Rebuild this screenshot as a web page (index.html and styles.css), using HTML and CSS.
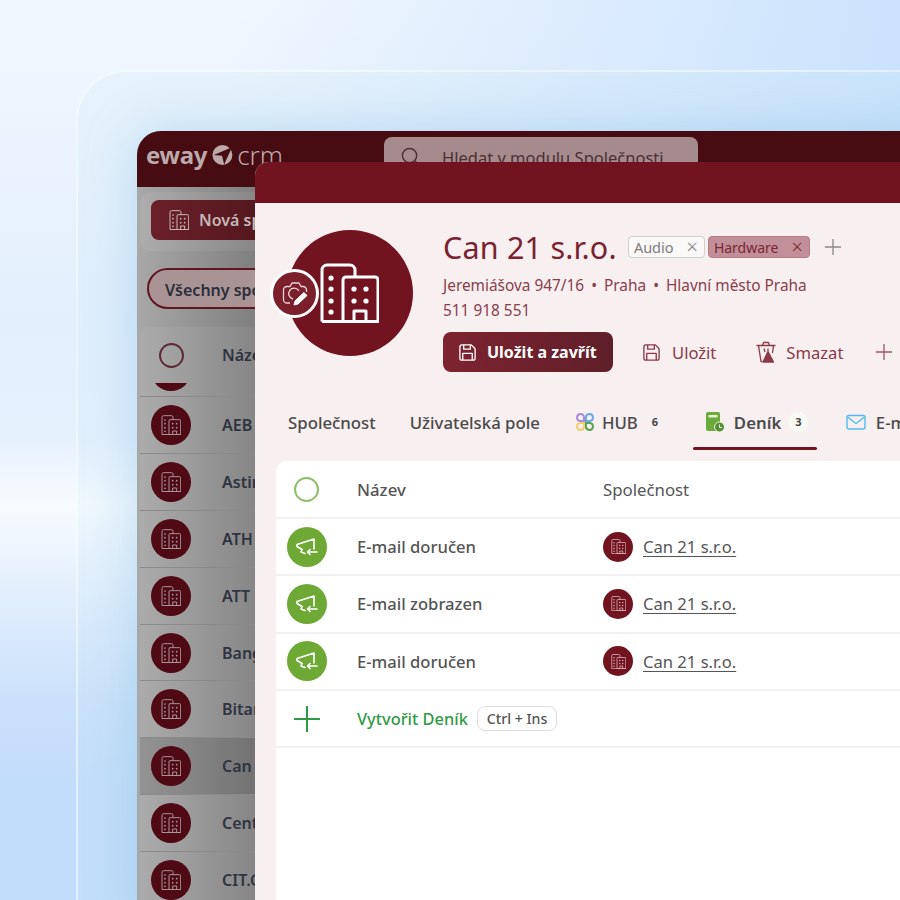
FILE: index.html
```html
<!DOCTYPE html>
<html lang="cs">
<head>
  <meta charset="utf-8" />
  <title>eWay CRM</title>
  <link rel="stylesheet" href="styles.css">
</head>
<body>
  <svg class="defs" width="0" height="0">
    <symbol id="building" viewBox="0 0 60 60">
      <g fill="none" stroke="currentColor" stroke-width="3" stroke-linejoin="round">
        <path d="M3 58.500V7a5 5 0 0 1 5-5H31a5 5 0 0 1 5 5V14"/>
        <path d="M24 58.500V17a3 3 0 0 1 3-3H56a3 3 0 0 1 3 3V58.500Z"/>
        <path d="M3 58.500H59M35 58.500V48H47V58.500"/>
      </g>
      <g fill="currentColor">
        <circle cx="12" cy="15" r="2.600"/><circle cx="12" cy="26" r="2.600"/><circle cx="12" cy="38" r="2.600"/><circle cx="12" cy="49" r="2.600"/>
        <circle cx="35" cy="26" r="2.600"/><circle cx="47" cy="26" r="2.600"/><circle cx="35" cy="38" r="2.600"/><circle cx="47" cy="38" r="2.600"/>
      </g>
    </symbol>
    <symbol id="horn" viewBox="0 0 24 24">
      <g fill="none" stroke="currentColor" stroke-width="1.600" stroke-linecap="round" stroke-linejoin="round">
        <path d="M2 9.500 19 4V14M2 9.500V11.500L7 14.500"/>
        <path d="M7 14.500 6 17 10 18.500M22 17H12.500M15 14.500 12.500 17 15 19.500"/>
      </g>
    </symbol>
    <symbol id="save" viewBox="0 0 20 20">
      <g fill="none" stroke="currentColor" stroke-width="1.400" stroke-linejoin="round">
        <path d="M2 4a2 2 0 0 1 2-2H14L18 6V16a2 2 0 0 1-2 2H4a2 2 0 0 1-2-2Z"/>
        <path d="M6 2V6.500H13V2M5 18V11H15V18"/>
      </g>
    </symbol>
  </svg>

  <div class="stage">
    <div class="frame"></div>

    <section class="back">
      <header class="back-head">
        <div class="logo">
          <span class="logo-eway">eway</span>
          <svg class="logo-mark" viewBox="0 0 24 24"><circle cx="12" cy="12" r="11.500" fill="currentColor"/><path d="M2 12 23 3 14 23 11.500 13Z" fill="#470b12"/></svg>
          <span class="logo-crm">crm</span>
        </div>
        <div class="search">
          <svg class="search-icon" viewBox="0 0 20 20"><circle cx="9" cy="9" r="7.500" fill="none" stroke="currentColor" stroke-width="1.500"/><path d="M14.500 14.500 19 19" stroke="currentColor" stroke-width="1.500"/></svg>
          <span>Hledat v modulu Společnosti</span>
        </div>
      </header>
      <div class="back-body">
        <div class="toolbar">
          <button class="new-btn"><svg class="new-icon"><use href="#building"/></svg>Nová společnost</button>
        </div>
        <div class="filter">Všechny společnosti</div>
        <div class="list">
          <div class="list-head"><span class="list-check"></span><span class="list-label">Název</span></div>
          <div class="list-row list-row-cut"><span class="row-avatar"></span></div>
          <div class="list-row"><span class="row-avatar"><svg><use href="#building"/></svg></span><span class="list-label">AEB</span></div>
          <div class="list-row"><span class="row-avatar"><svg><use href="#building"/></svg></span><span class="list-label">Astin</span></div>
          <div class="list-row"><span class="row-avatar"><svg><use href="#building"/></svg></span><span class="list-label">ATH</span></div>
          <div class="list-row"><span class="row-avatar"><svg><use href="#building"/></svg></span><span class="list-label">ATT</span></div>
          <div class="list-row"><span class="row-avatar"><svg><use href="#building"/></svg></span><span class="list-label">Bang</span></div>
          <div class="list-row"><span class="row-avatar"><svg><use href="#building"/></svg></span><span class="list-label">Bitar</span></div>
          <div class="list-row list-row-on"><span class="row-avatar"><svg><use href="#building"/></svg></span><span class="list-label">Can</span></div>
          <div class="list-row"><span class="row-avatar"><svg><use href="#building"/></svg></span><span class="list-label">Cent</span></div>
          <div class="list-row"><span class="row-avatar"><svg><use href="#building"/></svg></span><span class="list-label">CIT.C</span></div>
        </div>
      </div>
    </section>

    <section class="front">
      <div class="front-head"></div>
      <div class="profile">
        <div class="avatar">
          <svg class="avatar-icon"><use href="#building"/></svg>
          <span class="photo">
            <svg viewBox="0 0 28 28" fill="none" stroke="#e9d5d8" stroke-width="1.300" stroke-linejoin="round">
              <path d="M9 23H6a3.500 3.500 0 0 1-3.500-3.500V10A3.500 3.500 0 0 1 6 6.500H9L11 3H18L20 6.500H22A3.500 3.500 0 0 1 25.500 10V12"/>
              <path d="M12 19a5.500 5.500 0 1 1 6-8"/>
              <path d="M13 25 14 21 23 12.500 26 15.500 17 24Z" fill="#fff" stroke="#fff" stroke-width="1"/>
            </svg>
          </span>
        </div>
        <div class="info">
          <div class="title-line">
            <h1 class="name">Can 21 s.r.o.</h1>
            <span class="tag">Audio<i class="tag-x">×</i></span>
            <span class="tag tag-on">Hardware<i class="tag-x">×</i></span>
            <svg class="tag-plus" viewBox="0 0 20 20"><path d="M10 1V19M1 10H19" stroke="currentColor" stroke-width="1.500"/></svg>
          </div>
          <p class="meta meta-first">Jeremiášova 947/16 <b>•</b> Praha <b>•</b> Hlavní město Praha</p>
          <p class="meta">511 918 551</p>
          <div class="actions">
            <button class="save-close"><svg class="act-icon"><use href="#save"/></svg>Uložit a zavřít</button>
            <button class="act"><svg class="act-icon"><use href="#save"/></svg>Uložit</button>
            <button class="act act-del">
              <svg class="act-icon act-icon-big" viewBox="0 0 22 22" fill="none" stroke="currentColor" stroke-width="1.300" stroke-linejoin="round">
                <path d="M1.500 4.500H20.500M7.500 4.500 8.500 1.500H13.500L14.500 4.500M3.500 4.500 6 20.500H7.500M18.500 4.500 17.500 12M9 7.500 10 11M13 7.500V10"/>
                <path d="M13 10.500 18.500 21H8Z" fill="currentColor"/>
              </svg>Smazat</button>
            <svg class="act-plus" viewBox="0 0 20 20"><path d="M10 1V19M1 10H19" stroke="currentColor" stroke-width="1.500"/></svg>
          </div>
        </div>
      </div>

      <nav class="tabs">
        <span class="tab tab-first">Společnost</span>
        <span class="tab">Uživatelská pole</span>
        <span class="tab tab-hub">
          <svg class="tab-icon" viewBox="0 0 20 20" fill="none" stroke-width="2">
            <path d="M9 9H5a3.500 3.500 0 1 1 4-4Z" stroke="#a98bd6"/>
            <path d="M11 9h4a3.500 3.500 0 1 0-4-4Z" stroke="#6aa9e4"/>
            <path d="M9 11H5a3.500 3.500 0 1 0 4 4Z" stroke="#f0cf6e"/>
            <path d="M11 11h4a3.500 3.500 0 1 1-4 4Z" stroke="#5aa352"/>
          </svg>HUB<small class="count count-plain">6</small></span>
        <span class="tab tab-on">
          <svg class="tab-icon" viewBox="0 0 20 20">
            <rect x="1" y="0" width="14" height="19" rx="2" fill="#6aab3a"/>
            <rect x="3.500" y="3" width="9" height="2.500" fill="#e6f2da"/>
            <circle cx="14.500" cy="15" r="5" fill="#4f9431" stroke="#f8eff1"/>
            <path d="M14.500 12.500V15.500H17" fill="none" stroke="#fff" stroke-width="1"/>
          </svg>Deník<small class="count">3</small></span>
        <span class="tab tab-mail">
          <svg class="tab-icon" viewBox="0 0 20 20" fill="none" stroke="#4fbdf0" stroke-width="1.400" stroke-linejoin="round">
            <rect x="1" y="3.500" width="18" height="13.500" rx="2"/><path d="M1.500 5 10 11.500 18.500 5"/>
          </svg>E-mail</span>
      </nav>

      <div class="table">
        <div class="t-row t-head">
          <span class="t-lead"><span class="t-check"></span></span>
          <span class="t-name">Název</span>
          <span class="t-comp">Společnost</span>
        </div>
        <div class="t-row">
          <span class="t-lead"><span class="horn"><svg><use href="#horn"/></svg></span></span>
          <span class="t-name">E-mail doručen</span>
          <span class="t-comp"><span class="mini"><svg><use href="#building"/></svg></span><a class="link">Can 21 s.r.o.</a></span>
        </div>
        <div class="t-row">
          <span class="t-lead"><span class="horn"><svg><use href="#horn"/></svg></span></span>
          <span class="t-name">E-mail zobrazen</span>
          <span class="t-comp"><span class="mini"><svg><use href="#building"/></svg></span><a class="link">Can 21 s.r.o.</a></span>
        </div>
        <div class="t-row">
          <span class="t-lead"><span class="horn"><svg><use href="#horn"/></svg></span></span>
          <span class="t-name">E-mail doručen</span>
          <span class="t-comp"><span class="mini"><svg><use href="#building"/></svg></span><a class="link">Can 21 s.r.o.</a></span>
        </div>
        <div class="t-row t-add">
          <span class="t-lead"><svg class="add-plus" viewBox="0 0 26 26"><path d="M13 0V26M0 13H26" stroke="currentColor" stroke-width="2"/></svg></span>
          <span class="add-text">Vytvořit Deník</span>
          <kbd class="key">Ctrl + Ins</kbd>
        </div>
      </div>
    </section>
  </div>
</body>
</html>
```

FILE: styles.css
```css
*{margin:0;padding:0;box-sizing:border-box;}
html,body{width:900px;height:900px;overflow:hidden;}
body{font-family:"Noto Sans","Open Sans",sans-serif;}
button{font:inherit;border:none;background:none;}
.defs{position:absolute;}

.stage{
  position:relative;
  width:900px;
  height:900px;
  overflow:hidden;
  background:
    linear-gradient(90deg,rgba(190,220,252,0) 25%,rgba(190,220,252,.75) 100%),
    linear-gradient(180deg,#f1f7fe 0,#e3effd 320px,#e6f1fe 440px,#f8fbff 505px,#e3effd 590px,#cbe1fb 700px,#c2dcfb 780px,#c1dcfb 900px);
}
.frame{
  position:absolute;
  left:76px;
  top:70px;
  width:900px;
  height:900px;
  border:2px solid rgba(255,255,255,.5);
  border-radius:50px;
  background:rgba(200,232,245,.18);
}

/* window behind */
.back{
  position:absolute;
  left:137px;
  top:131px;
  width:800px;
  height:800px;
  border-radius:24px 24px 0 0;
  overflow:hidden;
  background:linear-gradient(90deg,#a8a8a8,#7f7f7f 118px);
  box-shadow:0 0 50px rgba(120,180,225,.4);
}
.back-head{
  height:56px;
  background:#470b12;
  display:flex;
  padding:4px 0 0 9px;
  gap:101px;
}
.logo{display:flex;align-items:center;height:39px;color:#bba9ab;gap:4px;width:137px;white-space:nowrap;}
.logo-eway{font-size:24px;font-weight:700;letter-spacing:-.3px;}
.logo-mark{width:24px;height:24px;margin-left:1px;}
.logo-crm{font-size:26px;font-weight:300;}
.search{
  width:314px;
  height:52px;
  border-radius:8px 8px 0 0;
  background:#a58b8e;
  display:flex;
  align-items:flex-start;
  padding:11px 17px;
  gap:22px;
  color:#4c3034;
  font-size:16.500px;
  white-space:nowrap;
}
.search-icon{width:19px;height:19px;margin-top:1px;flex:none;}
.search{margin-top:2px;height:50px;padding-top:9px;}
.toolbar{
  margin:5px 0 0 3px;
  height:59px;
  padding:8px 0 0 11px;
  background:rgba(255,255,255,.07);
  border-radius:10px;
}
.new-btn{
  display:flex;
  align-items:center;
  gap:10px;
  width:180px;
  height:40px;
  padding-left:18px;
  border-radius:8px;
  background:linear-gradient(90deg,#6b2029,#451016);
  color:#c4b6b8;
  font-size:16px;
  font-weight:600;
  white-space:nowrap;
}
.new-icon{width:20px;height:20px;}
.filter{
  margin:17px 0 0 10px;
  width:200px;
  height:41px;
  padding:9px 16px;
  border:2px solid #5e1620;
  border-radius:21px;
  background:#a99395;
  color:#2b2f3a;
  font-size:16px;
  font-weight:600;
  white-space:nowrap;
}
.list{
  margin:18px 0 0 3px;
  border-radius:10px 10px 0 0;
  background:rgba(255,255,255,.06);
}
.list-head{height:56px;display:flex;align-items:center;padding-left:19px;}
.list-check{
  width:25px;
  height:25px;
  border:2px solid #5e2a33;
  border-radius:50%;
  margin-right:38px;
}
.list-label{color:#2f3440;font-size:16px;font-weight:600;white-space:nowrap;}
.list-row{
  height:56.900px;
  display:flex;
  align-items:center;
  padding-left:11px;
  gap:31px;
  border-top:1px solid #8a8a8a;
}
.list-row-cut{height:13px;align-items:flex-end;border-top:none;overflow:hidden;}
.list-row-cut .row-avatar{flex:none;margin-bottom:5px;}
.list-row-on{background:rgba(0,0,0,.14);}
.row-avatar{
  flex:none;
  width:40px;
  height:40px;
  border-radius:50%;
  background:#4f0a15;
  color:#a99497;
  display:flex;
  align-items:center;
  justify-content:center;
}
.row-avatar svg{width:20px;height:20px;}

/* window in front */
.front{
  position:absolute;
  left:255px;
  top:162px;
  width:800px;
  height:800px;
  border-radius:14px 14px 0 0;
  overflow:hidden;
  background:#f8eff1;
}
.front-head{height:41px;background:#72141f;}
.profile{display:flex;padding:27px 0 0 32px;gap:30px;}
.avatar{
  position:relative;
  flex:none;
  width:126px;
  height:126px;
  border-radius:50%;
  background:#72141f;
  color:#fff;
  display:flex;
  align-items:center;
  justify-content:center;
}
.avatar-icon{width:60px;height:60px;margin-left:-2px;}
.photo{
  position:absolute;
  left:-17px;
  top:39px;
  width:49px;
  height:49px;
  border:3px solid #fff;
  border-radius:50%;
  background:#7b1f2a;
  display:flex;
  align-items:center;
  justify-content:center;
}
.photo svg{width:28px;height:28px;}
.info{color:#7d2a36;}
.title-line{display:flex;align-items:center;height:34px;white-space:nowrap;}
.name{font-size:30.500px;font-weight:400;color:#7a2230;margin-right:11px;letter-spacing:.2px;}
.tag{
  display:flex;
  align-items:center;
  justify-content:space-between;
  height:22px;
  width:77px;
  padding:0 6px 0 5px;
  border:1px solid #cfcfcf;
  border-radius:4px;
  background:#fbf8f8;
  color:#7e7e7e;
  font-size:14.500px;
}
.tag-on{
  width:102px;
  margin-left:3px;
  border-color:#b97a85;
  background:#c08f99;
  color:#7a2733;
  font-size:14px;
}
.tag-x{font-style:normal;font-size:20px;font-weight:300;line-height:1;}
.tag-plus{width:18px;height:18px;margin-left:14px;color:#8a8a8a;}
.meta{font-size:15.400px;line-height:25px;color:#8a3e4b;white-space:nowrap;}
.meta-first{margin-top:9px;}
.meta b{font-weight:400;margin:0 3px;}
.actions{display:flex;align-items:center;margin-top:9px;white-space:nowrap;}
.save-close{
  display:flex;
  align-items:center;
  gap:10px;
  width:170px;
  height:40px;
  padding-left:15px;
  border-radius:8px;
  background:linear-gradient(90deg,#7e2330,#5f1f2a);
  color:#fff;
  font-size:16px;
  font-weight:700;
}
.act{display:flex;align-items:center;gap:11px;margin-left:29px;color:#8c3a47;font-size:16.600px;}
.act-del{gap:9px;margin-left:39px;}
.act-icon{width:19px;height:19px;flex:none;}
.act-icon-big{width:22px;height:22px;}
.act-plus{width:18px;height:18px;margin-left:32px;color:#a35b67;}

.tabs{display:flex;align-items:flex-start;margin-top:28px;padding-left:33px;height:51px;white-space:nowrap;}
.tab{
  display:flex;
  align-items:center;
  height:50px;
  padding-bottom:6px;
  margin-right:35px;
  color:#4a4a4a;
  font-size:16.800px;
  font-weight:500;
}
.tab-first{margin-right:34px;}
.tab-hub{margin-right:28px;}
.tab-icon{width:20px;height:20px;margin-right:7px;flex:none;}
.count{
  width:20px;
  height:20px;
  margin-left:7px;
  border-radius:50%;
  background:#f6faf2;
  color:#444;
  font-size:11px;
  font-weight:700;
  line-height:20px;
  text-align:center;
}
.count-plain{background:none;}
.tab-on{
  position:relative;
  padding-left:12px;
  width:124px;
  margin-right:29px;
  font-weight:600;
}
.tab-on .tab-icon{margin-right:9px;}
.tab-on::after{
  content:"";
  position:absolute;
  left:0;
  right:0;
  bottom:0;
  height:3px;
  border-radius:2px;
  background:#72141f;
}
.tab-mail .tab-icon{margin-right:10px;}

.table{
  margin:10px 0 0 21px;
  height:600px;
  border-radius:10px 10px 0 0;
  background:#fff;
  color:#555;
  font-size:16.600px;
}
.t-row{
  display:flex;
  align-items:center;
  height:57.300px;
  border-bottom:2px solid #f1f1f1;
}
.t-head{height:58px;}
.t-lead{width:81px;padding-left:11px;flex:none;display:flex;align-items:center;}
.t-check{
  width:25px;
  height:25px;
  margin-left:7px;
  border:2px solid #8cc068;
  border-radius:50%;
}
.t-name{width:246px;font-weight:500;white-space:nowrap;}
.t-head .t-name,.t-head .t-comp{font-size:16.800px;}
.t-comp{display:flex;align-items:center;gap:10px;white-space:nowrap;}
.horn{
  width:40px;
  height:40px;
  border-radius:50%;
  background:#6fa935;
  color:#fff;
  display:flex;
  align-items:center;
  justify-content:center;
}
.horn svg{width:24px;height:24px;}
.mini{
  width:30px;
  height:30px;
  border-radius:50%;
  background:#72141f;
  color:#ddbcc1;
  display:flex;
  align-items:center;
  justify-content:center;
}
.mini svg{width:15px;height:15px;}
.link{color:#555;text-decoration:underline;text-underline-offset:3px;}
.add-plus{width:26px;height:26px;margin-left:7px;color:#2f9a44;}
.add-text{color:#2f9a44;font-size:16.400px;font-weight:500;white-space:nowrap;margin-right:9px;}
.key{
  height:25px;
  padding:0 9px;
  border:1px solid #ddd;
  border-radius:8px;
  color:#555;
  font-family:inherit;
  font-size:14.200px;
  font-weight:500;
  line-height:23px;
}
```
